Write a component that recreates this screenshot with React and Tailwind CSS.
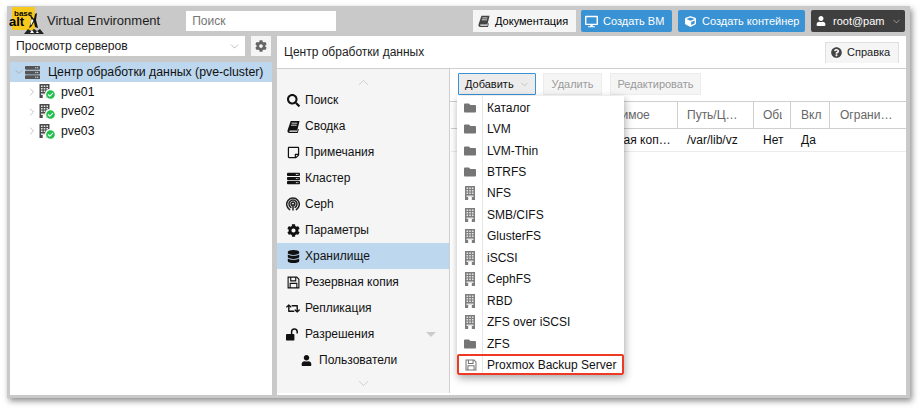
import React from 'react';
import {
  FaSearch, FaRegStickyNote, FaServer, FaCog, FaDatabase, FaRetweet,
  FaUser, FaFolder, FaDesktop, FaCube, FaQuestionCircle, FaCheckCircle,
} from 'react-icons/fa';
import { ChevronDown, ChevronRight, ChevronUp } from 'lucide-react';

const CephIcon = () => (
  <svg width="14" height="14" viewBox="0 0 14 14" fill="none" stroke="#222" strokeWidth="1.5" strokeLinecap="round">
    <path d="M3.6 12.6A6.3 6.3 0 1 1 10.4 12.6" />
    <path d="M4.9 10.4A4 4 0 1 1 9.1 10.4" />
    <path d="M6 8.6A1.9 1.9 0 1 1 8 8.6" />
    <path d="M7 7.5V13" />
  </svg>
);

const BookIcon = ({ size = 13, color = '#111' }) => (
  <svg width={size} height={size} viewBox="0 0 14 14">
    <path d="M4 1h9.5L11 11.2H3.2c-1 0-1 1.4 0 1.4H11l.8-3 .9.4L11.6 14H2.6C1 14 .2 12.6.6 11z" fill={color} />
    <path d="M5 3.4h6M4.4 5.6h6" stroke="#fff" strokeWidth="0.9" />
  </svg>
);

const BuildingIcon = ({ color = '#7d7d7d', w = 10, h = 14 }) => (
  <svg width={w} height={h} viewBox="0 0 10 14">
    <rect width="10" height="14" fill={color} />
    {[1.5, 4, 6.5].map((y) =>
      [1.5, 4.2, 6.9].map((x) => <rect key={`${x}-${y}`} x={x} y={y} width="1.6" height="1.5" fill="#e4e4e4" />)
    )}
    <rect x="1.5" y="9.5" width="7" height="1.5" fill="#e4e4e4" />
    <rect x="3.2" y="11" width="3.6" height="3" fill="#fff" />
  </svg>
);

const FloppyIcon = ({ color = '#111', size = 13 }) => (
  <svg width={size} height={size} viewBox="0 0 14 14" fill="none" stroke={color} strokeWidth="1.2">
    <path d="M1.2 1.2h9.3l2.3 2.3v9.3H1.2z" />
    <path d="M4 1.2v4h5.4v-4" />
    <path d="M3.4 12.8V8h7.2v4.8" />
  </svg>
);

const UnlockIcon = () => (
  <svg width="15" height="13" viewBox="0 0 15 13">
    <rect x="0" y="6" width="9" height="7" rx="1" fill="#111" />
    <path d="M6 6.5V3.6a3 3 0 0 1 6 0v1.8" fill="none" stroke="#111" strokeWidth="1.6" />
  </svg>
);

const Logo = () => (
  <div className="relative w-[40px] h-[30px] shrink-0">
    <div className="absolute left-[5px] top-[1px] w-[23px] h-[23px] bg-[#f7c91c] rounded-[1px]" />
    <span className="absolute left-[7px] top-[4px] text-[8px] leading-[7px] font-bold text-black">base</span>
    <span className="absolute left-[2px] top-[11px] text-[13px] leading-[10px] font-bold text-black">alt</span>
    <svg className="absolute left-[15px] top-[6px]" width="33" height="23" viewBox="0 0 33 23">
      <path d="M7 1l5 6 1-5 2-1-1 7 2 8-3-1-1-5-3 5-2 1 2-6 0-4z" fill="#111" />
      <path d="M9.5 6.5l2 2-2 4-1 1z" fill="#fff" />
      <path d="M2 22l4-5 3 2 3-2 3 2 3-2 4 5z" fill="#222" />
      <path d="M8 21l2-3 2 3zM14 21l1-2 2 2z" fill="#fff" />
    </svg>
  </div>
);

const NodeIcon = () => (
  <div className="relative w-[16px] h-[15px] shrink-0">
    <div className="absolute left-0 top-0"><BuildingIcon color="#4a4a4a" w={11} h={14} /></div>
    <div className="absolute left-[6px] top-[5px] w-[10px] h-[10px] rounded-full bg-white" />
    <FaCheckCircle className="absolute left-[7px] top-[6px] text-[#21bf4b]" size={9} />
  </div>
);

const navItems = [
  { label: 'Поиск', icon: <FaSearch size={13} /> },
  { label: 'Сводка', icon: <BookIcon /> },
  { label: 'Примечания', icon: <FaRegStickyNote size={13} /> },
  { label: 'Кластер', icon: <FaServer size={13} /> },
  { label: 'Ceph', icon: <CephIcon /> },
  { label: 'Параметры', icon: <FaCog size={13} /> },
  { label: 'Хранилище', icon: <FaDatabase size={13} />, active: true },
  { label: 'Резервная копия', icon: <FloppyIcon /> },
  { label: 'Репликация', icon: <FaRetweet size={15} /> },
  { label: 'Разрешения', icon: <UnlockIcon />, caret: true },
  { label: 'Пользователи', icon: <FaUser size={11} />, sub: true },
];

const menuItems = [
  ['Каталог', 'folder'], ['LVM', 'folder'], ['LVM-Thin', 'folder'], ['BTRFS', 'folder'],
  ['NFS', 'building'], ['SMB/CIFS', 'building'], ['GlusterFS', 'building'], ['iSCSI', 'building'],
  ['CephFS', 'building'], ['RBD', 'building'], ['ZFS over iSCSI', 'building'], ['ZFS', 'folder'],
];

const App = () => {
  return (
    <div className="w-[923px] h-[412px] bg-white overflow-hidden pt-[6px] pl-[7px] text-[12px] text-black font-['Liberation_Sans',Arial,sans-serif]">
      <div className="relative w-[903px] h-[392px] bg-[#c9c9c9] flex flex-col shadow-[2px_3px_6px_rgba(0,0,0,0.45)]">
        {/* top bar */}
        <div className="h-[30px] flex items-center shrink-0 pr-[5px]">
          <Logo />
          <span className="text-[13px] text-[#1c1c1c] whitespace-nowrap">Virtual Environment</span>
          <div className="ml-[26px] w-[150px] h-[20px] bg-white flex items-center pl-[6px] text-[12px] text-[#757575]">Поиск</div>
          <div className="ml-auto flex items-center">
            <div className="h-[22px] w-[103px] bg-[#f5f5f5] flex items-center gap-[5px] pl-[5px] mr-[5px] text-[11px]">
              <BookIcon size={12} color="#444" />Документация
            </div>
            <div className="h-[22px] w-[91px] bg-[#3892d4] rounded-[2px] flex items-center gap-[5px] pl-[4px] mr-[6px] text-[11px] text-white">
              <FaDesktop size={13} />Создать ВМ
            </div>
            <div className="h-[22px] w-[127px] bg-[#3892d4] rounded-[2px] flex items-center gap-[6px] pl-[7px] mr-[6px] text-[11px] text-white">
              <FaCube size={11} />Создать контейнер
            </div>
            <div className="h-[22px] w-[94px] bg-[#3f3f3f] rounded-[2px] flex items-center pl-[5px] text-[11px] text-white">
              <FaUser size={10} />
              <span className="ml-[7px]">root@pam</span>
              <ChevronDown size={11} strokeWidth={1} className="ml-[6px]" />
            </div>
          </div>
        </div>

        <div className="flex-1 flex min-h-0">
          {/* left column */}
          <div className="w-[262px] ml-[3px] flex flex-col shrink-0">
            <div className="flex h-[20px] shrink-0">
              <div className="w-[235px] bg-white flex items-center pl-[6px] text-[12.2px] text-[#222]">
                Просмотр серверов
                <ChevronDown size={13} strokeWidth={1} className="ml-auto mr-[4px] text-[#888]" />
              </div>
              <div className="ml-[6px] w-[20px] bg-[#f5f5f5] flex items-center justify-center">
                <FaCog size={12} className="text-[#666]" />
              </div>
            </div>
            <div className="flex-1 mt-[6px] mb-[3px] bg-white text-[12.3px]">
              <div className="h-[20px] bg-[#bcd7ee] flex items-center pl-[3px]">
                <ChevronDown size={12} strokeWidth={1.2} className="text-[#999]" />
                <FaServer size={15} className="text-[#555]" />
                <span className="ml-[8px] text-[#111]">Центр обработки данных (pve-cluster)</span>
              </div>
              {['pve01', 'pve02', 'pve03'].map((name) => (
                <div key={name} className="h-[19.7px] flex items-center pl-[16px]">
                  <ChevronRight size={12} strokeWidth={1.2} className="text-[#999]" />
                  <span className="ml-[1px] flex"><NodeIcon /></span>
                  <span className="ml-[6px] text-[#111]">{name}</span>
                </div>
              ))}
            </div>
          </div>

          {/* main panel */}
          <div className="ml-[5px] w-[629px] mb-[3px] bg-white flex flex-col shrink-0">
            <div className="h-[33px] shrink-0 flex items-center border-b border-[#cfcfcf] pl-[7px] text-[12px] text-[#222]">
              Центр обработки данных
              <div className="ml-auto mr-[7px] h-[21px] w-[74px] bg-[#f5f5f5] border border-b-0 border-[#e0e0e0] flex items-center gap-[5px] pl-[5px] text-[11px]">
                <FaQuestionCircle size={11} className="text-[#444]" />Справка
              </div>
            </div>
            <div className="flex-1 flex min-h-0">
              {/* nav */}
              <div className="w-[173px] shrink-0 bg-[#f5f5f5] border-r border-[#cfcfcf] flex flex-col mb-[2px]">
                <div className="h-[18px] flex items-center justify-center pt-[8px]">
                  <ChevronUp size={17} strokeWidth={0.7} className="text-[#aaa]" />
                </div>
                <div>
                  {navItems.map((item) => (
                    <div
                      key={item.label}
                      className={`h-[26px] flex items-center text-[12px] text-[#111] ${item.active ? 'bg-[#bcd7ee]' : ''} ${item.sub ? 'pl-[22px]' : 'pl-[9px]'}`}
                    >
                      <span className="w-[14px] flex justify-center text-[#111]">{item.icon}</span>
                      <span className={item.sub ? 'ml-[6px]' : 'ml-[5px]'}>{item.label}</span>
                      {item.caret && <div className="ml-auto mr-[13px] w-0 h-0 border-l-[5px] border-r-[5px] border-t-[5px] border-l-transparent border-r-transparent border-t-[#ccc]" />}
                    </div>
                  ))}
                </div>
                <div className="flex-1 flex items-center justify-center">
                  <ChevronDown size={17} strokeWidth={0.7} className="text-[#aaa]" />
                </div>
              </div>

              {/* content */}
              <div className="relative flex-1 min-w-0 flex flex-col">
                <div className="h-[33px] shrink-0 flex items-center pl-[8px] pb-[2px] text-[11px] border-b border-[#cfcfcf]">
                  <div className="h-[22px] w-[78px] bg-[#ececec] border border-[#3892d4] rounded-[1px] flex items-center pl-[6px] text-[#111]">
                    Добавить
                    <ChevronDown size={11} strokeWidth={1} className="ml-[5px] text-[#999]" />
                  </div>
                  <div className="ml-[7px] h-[22px] w-[59px] bg-[#f5f5f5] border border-[#ececec] flex items-center justify-center text-[#9a9a9a]">Удалить</div>
                  <div className="ml-[8px] h-[22px] w-[91px] bg-[#f5f5f5] border border-[#ececec] flex items-center justify-center text-[#9a9a9a]">Редактировать</div>
                </div>
                <div className="ml-[1px] h-[27px] shrink-0 flex border-b border-[#cfcfcf] text-[12px] text-[#666] whitespace-nowrap">
                  <div className="w-[118px]" />
                  <div className="w-[109px] pl-[9px] flex items-center border-r border-[#cfcfcf]">Содержимое</div>
                  <div className="w-[76px] pl-[9px] flex items-center border-r border-[#cfcfcf]">Путь/Ц…</div>
                  <div className="w-[37px] pl-[9px] flex items-center border-r border-[#cfcfcf]">
                    <span className="w-[19px] overflow-hidden">Общий</span>
                  </div>
                  <div className="w-[39px] pl-[10px] flex items-center border-r border-[#cfcfcf]">Вкл</div>
                  <div className="flex-1 pl-[10px] flex items-center">Ограни…</div>
                </div>
                <div className="ml-[1px] h-[23px] shrink-0 flex border-b border-[#ececec] text-[12px] text-[#111] whitespace-nowrap">
                  <div className="w-[118px]" />
                  <div className="w-[109px] pl-[9px] flex items-center">Резервная коп…</div>
                  <div className="w-[76px] pl-[9px] flex items-center">/var/lib/vz</div>
                  <div className="w-[37px] pl-[9px] flex items-center">Нет</div>
                  <div className="w-[39px] pl-[10px] flex items-center">Да</div>
                </div>
                <div className="flex-1" />

                {/* dropdown */}
                <div className="absolute left-[7px] top-[27px] w-[167px] pt-[1px] bg-white shadow-[1px_3px_8px_rgba(0,0,0,0.35)] z-10 flex flex-col">
                  <div className="absolute left-[25px] top-0 bottom-0 w-px bg-[#e6e6e6]" />
                  {menuItems.map(([label, kind]) => (
                    <div key={label} className="h-[21.45px] flex items-center text-[12px] text-[#111]">
                      <span className="w-[25px] pl-[1px] flex justify-center text-[#757575]">
                        {kind === 'folder' ? <FaFolder size={12} /> : <BuildingIcon />}
                      </span>
                      <span className="ml-[5px]">{label}</span>
                    </div>
                  ))}
                  <div className="h-[21px] flex items-center text-[12px] text-[#111] border-2 border-[#ee3a24] rounded-[2px] relative">
                    <span className="w-[23px] flex justify-center"><FloppyIcon color="#757575" size={12} /></span>
                    <span className="ml-[5px] whitespace-nowrap">Proxmox Backup Server</span>
                  </div>
                </div>
              </div>
            </div>
          </div>
        </div>
      </div>
    </div>
  );
};

export default App;
